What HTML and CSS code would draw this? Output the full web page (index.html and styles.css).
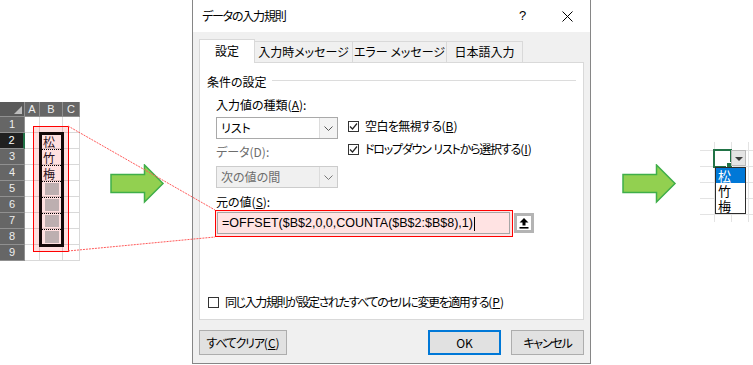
FILE: index.html
```html
<!DOCTYPE html>
<html lang="ja">
<head>
  <meta charset="UTF-8">
  <title>データの入力規則</title>
  <link rel="stylesheet" href="styles.css">
</head>
<body>
  <div class="canvas">

    <!-- Source sheet -->
    <div class="sheet">
      <div class="grid">
        <div class="head corner"></div><div class="head">A</div><div class="head">B</div><div class="head">C</div>
        <div class="head">1</div><div></div><div></div><div></div>
        <div class="head selected">2</div><div></div><div></div><div></div>
        <div class="head">3</div><div></div><div></div><div></div>
        <div class="head">4</div><div></div><div></div><div></div>
        <div class="head">5</div><div></div><div></div><div></div>
        <div class="head">6</div><div></div><div></div><div></div>
        <div class="head">7</div><div></div><div></div><div></div>
        <div class="head">8</div><div></div><div></div><div></div>
        <div class="head">9</div><div></div><div></div><div></div>
      </div>
      <div class="range-mark"></div>
      <div class="range-box">
        <div class="range-item">松</div>
        <div class="range-item">竹</div>
        <div class="range-item">梅</div>
        <div class="range-item"><span class="blank"></span></div>
        <div class="range-item"><span class="blank"></span></div>
        <div class="range-item"><span class="blank"></span></div>
        <div class="range-item"><span class="blank"></span></div>
      </div>
    </div>

    <svg class="arrow arrow-in" width="55" height="40" viewBox="0 0 55 40">
      <polygon points="1,10.5 34.5,10.5 34.5,1 53,19.5 34.5,38 34.5,28.5 1,28.5" fill="#92d050" stroke="#3fae49" stroke-width="1.5"/>
    </svg>

    <!-- Data validation dialog -->
    <div class="dialog">
      <div class="titlebar">
        <span class="title"><span class="tight">データの入力規則</span></span>
        <span class="title-btn">?</span>
        <span class="title-btn">
          <svg width="11" height="11" viewBox="0 0 11 11"><path d="M0.5 0.5 L10.5 10.5 M10.5 0.5 L0.5 10.5" stroke="#000" stroke-width="1"/></svg>
        </span>
      </div>

      <div class="dialog-body">
        <div class="tabs">
          <div class="tab tab-settings active">設定</div>
          <div class="tab tab-input">入力時メッセージ</div>
          <div class="tab tab-error">エラー メッセージ</div>
          <div class="tab tab-ime">日本語入力</div>
        </div>

        <div class="panel">
          <div class="group-title"><span>条件の設定</span></div>

          <div class="criteria">
            <div class="fields">
              <label>入力値の種類(<u>A</u>):</label>
              <div class="select">
                <span class="value">リスト</span>
                <span class="chev"><svg width="9" height="5" viewBox="0 0 9 5"><polyline points="0.5,0.5 4.5,4.5 8.5,0.5" fill="none" stroke="#555" stroke-width="1"/></svg></span>
              </div>
              <label class="dim">データ(D):</label>
              <div class="select disabled">
                <span class="value">次の値の間</span>
                <span class="chev"><svg width="9" height="5" viewBox="0 0 9 5"><polyline points="0.5,0.5 4.5,4.5 8.5,0.5" fill="none" stroke="#777" stroke-width="1"/></svg></span>
              </div>
            </div>
            <div class="options">
              <div class="check">
                <span class="box"><svg width="9" height="9" viewBox="0 0 9 9"><polyline points="1,4.5 3.5,7 8,1.5" fill="none" stroke="#222" stroke-width="1.2"/></svg></span>
                <span><span class="semi">空白を無視する</span>(<u>B</u>)</span>
              </div>
              <div class="check">
                <span class="box"><svg width="9" height="9" viewBox="0 0 9 9"><polyline points="1,4.5 3.5,7 8,1.5" fill="none" stroke="#222" stroke-width="1.2"/></svg></span>
                <span><span class="tight">ドロップダウン</span> <span class="tight">リストから選択する</span>(<u>I</u>)</span>
              </div>
            </div>
          </div>

          <label class="source-label">元の値(<u>S</u>):</label>
          <div class="source-row">
            <div class="source">
              <div class="source-input">=OFFSET($B$2,0,0,COUNTA($B$2:$B$8),1)<span class="caret"></span></div>
            </div>
            <div class="collapse">
              <svg width="10" height="11" viewBox="0 0 10 11"><polygon points="5,0 9.5,4.5 6.5,4.5 6.5,7.5 3.5,7.5 3.5,4.5 0.5,4.5" fill="#000"/><rect x="0.5" y="9" width="9" height="1.6" fill="#000"/></svg>
            </div>
          </div>

          <div class="check apply">
            <span class="box"></span>
            <span><span class="tighter">同じ入力規則が設定されたすべてのセルに変更を適用する</span>(<u>P</u>)</span>
          </div>
        </div>

        <div class="buttons">
          <button class="btn-clear"><span class="tight">すべてクリア</span>(<u>C</u>)</button>
          <button class="btn-ok">OK</button>
          <button class="btn-cancel"><span class="tight">キャンセル</span></button>
        </div>
      </div>
    </div>

    <svg class="arrow arrow-out" width="55" height="40" viewBox="0 0 55 40">
      <polygon points="1,10.5 34.5,10.5 34.5,1 53,19.5 34.5,38 34.5,28.5 1,28.5" fill="#92d050" stroke="#3fae49" stroke-width="1.5"/>
    </svg>

    <!-- Resulting dropdown -->
    <div class="result">
      <div class="active-cell"></div>
      <div class="drop-btn"></div>
      <ul class="drop-list">
        <li class="current">松</li>
        <li>竹</li>
        <li>梅</li>
      </ul>
    </div>

    <svg class="leader" width="753" height="365" viewBox="0 0 753 365">
      <path d="M68 126 L215 210 M68 251 L215 237" stroke="#ff5a5a" stroke-width="1" stroke-dasharray="2 1" fill="none"/>
    </svg>
  </div>
</body>
</html>
```

FILE: styles.css
```css
/* General */
* {
  box-sizing: border-box;
}

body {
  margin: 0;
  background: #fff;
  color: #000;
  font-family: "Noto Sans CJK JP", sans-serif;
  font-size: 12px;
  line-height: 14px;
  font-feature-settings: "palt";
}

.canvas {
  position: relative;
  width: 753px;
  height: 365px;
  display: flex;
  align-items: flex-start;
  overflow: hidden;
}

/* kana-heavy labels: the UI font sets kana narrower */
.semi {
  letter-spacing: -0.6px;
}

.tight {
  letter-spacing: -1.2px;
}

.tighter {
  letter-spacing: -1.4px;
}

/* Source sheet */
.sheet {
  position: relative;
  flex: none;
  width: 80px;
  margin-top: 102px;
}

.grid {
  display: grid;
  grid-template-columns: 25px 15px 23px 17px;
  grid-template-rows: 15px repeat(9, 16px);
  font-family: "Liberation Sans", sans-serif;
  font-size: 11px;
}

.grid > div {
  border-right: 1px solid #d9d9d9;
  border-bottom: 1px solid #d9d9d9;
}

.grid .head {
  background: #666;
  color: #eee;
  text-align: center;
  line-height: 15px;
  border-color: #909090;
}

.grid .corner {
  position: relative;
  background: #5a5a5a;
}

.corner::after {
  content: "";
  position: absolute;
  right: 2px;
  bottom: 2px;
  border-left: 8px solid transparent;
  border-bottom: 8px solid #bdbdbd;
}

.grid .selected {
  background: #202020;
  color: #fff;
  border-right: 2px solid #217346;
}

.range-mark {
  position: absolute;
  left: 33px;
  top: 24px;
  width: 36px;
  height: 126px;
  border: 1px solid #f00;
  background: rgba(255, 0, 0, 0.12);
}

.range-box {
  position: absolute;
  left: 39px;
  top: 30px;
  width: 25px;
  height: 115px;
  border: 3px solid #140808;
  font-size: 12px;
  color: #2a1020;
}

.range-item {
  height: 16px;
  border-top: 1px dotted #000;
  line-height: 15px;
  padding-left: 1px;
}

.range-item:first-child {
  height: 14px;
  border-top: 0;
  line-height: 14px;
}

.range-item:last-child {
  height: 14px;
}

.blank {
  display: inline-block;
  width: 14px;
  height: 12px;
  margin: 1px 0 0 2px;
  vertical-align: top;
  background: #bdafb0;
}

/* Arrows */
.arrow {
  flex: none;
  margin-top: 164px;
}

.arrow-in {
  margin-left: 30px;
}

.arrow-out {
  margin-left: 31px;
}

.leader {
  position: absolute;
  left: 0;
  top: 0;
  pointer-events: none;
}

/* Dialog */
.dialog {
  flex: none;
  width: 399px;
  margin-left: 27px;
  background: #f0f0f0;
  border: 1px solid #868686;
  border-top: 0;
}

.titlebar {
  display: flex;
  align-items: center;
  height: 32px;
  background: #fff;
}

.title {
  flex: 1;
  padding-left: 9px;
}

.title-btn {
  display: flex;
  justify-content: center;
  align-items: center;
  width: 45px;
  height: 32px;
  font-family: "Liberation Sans", sans-serif;
  font-size: 13px;
}

.dialog-body {
  padding: 7px 6px 8px;
}

.tabs {
  display: flex;
  align-items: flex-end;
  height: 23px;
}

.tab {
  height: 21px;
  line-height: 19px;
  margin-right: -1px;
  border: 1px solid #d9d9d9;
  border-bottom: 0;
  background: #f0f0f0;
  text-align: center;
}

.tab.active {
  position: relative;
  z-index: 1;
  height: 24px;
  line-height: 22px;
  margin-bottom: -1px;
  background: #fff;
}

.tab-settings { width: 56px; }
.tab-input { width: 99px; }
.tab-error { width: 95px; }
.tab-ime { width: 77px; }

.panel {
  display: flex;
  flex-direction: column;
  height: 258px;
  padding: 12px 7px 10px;
  background: #fff;
  border: 1px solid #d9d9d9;
}

.group-title {
  display: flex;
  align-items: center;
  gap: 5px;
}

.group-title::after {
  content: "";
  flex: 1;
  margin-top: -3px;
  border-top: 1px solid #dcdcdc;
}

.criteria {
  display: flex;
  margin: 9px 0 0 9px;
}

.fields {
  display: flex;
  flex-direction: column;
  width: 122px;
}

.select {
  display: flex;
  height: 22px;
  margin-top: 5px;
  background: #fff;
  border: 1px solid #a9a9a9;
}

.select .value {
  flex: 1;
  padding-left: 4px;
  line-height: 20px;
}

.select .chev {
  display: flex;
  justify-content: center;
  align-items: center;
  width: 18px;
  background: #f3f3f3;
  border-left: 1px solid #dcdcdc;
}

.dim {
  margin-top: 6px;
  color: #6d6d6d;
}

.select.disabled {
  margin-top: 7px;
  background: #f0f0f0;
  border-color: #cccccc;
  color: #6d6d6d;
}

.select.disabled .chev {
  background: #f0f0f0;
}

.options {
  display: flex;
  flex-direction: column;
  gap: 9px;
  margin: 21px 0 0 10px;
}

.check {
  display: flex;
  align-items: center;
  gap: 6px;
}

.box {
  display: flex;
  justify-content: center;
  align-items: center;
  width: 11px;
  height: 11px;
  background: #fff;
  border: 1px solid #333;
}

.source-label {
  margin: 7px 0 0 9px;
}

.source-row {
  display: flex;
  margin: 1px 0 0 8px;
}

.source {
  width: 298px;
  height: 27px;
  padding: 1px 2px 2px 1px;
  background: #ffe3e3;
  border: 1px solid #f00;
}

.source-input {
  height: 22px;
  padding-left: 4px;
  border: 1px solid #a6a6a6;
  font-family: "Liberation Sans", sans-serif;
  font-size: 12.5px;
  line-height: 20px;
  white-space: nowrap;
}

.caret {
  display: inline-block;
  width: 1px;
  height: 14px;
  margin-left: 1px;
  vertical-align: middle;
  background: #000;
}

.collapse {
  display: flex;
  justify-content: center;
  align-items: center;
  width: 20px;
  height: 20px;
  margin: 3px 0 0 1px;
  background: #fff;
  border: 3px solid #b4b4b4;
}

.apply {
  margin: auto 0 0 1px;
}

/* Dialog buttons */
.buttons {
  display: flex;
  gap: 10px;
  margin-top: 10px;
}

.buttons button {
  height: 25px;
  padding: 0;
  background: #e1e1e1;
  border: 1px solid #adadad;
  font-family: inherit;
  font-size: 12px;
  font-feature-settings: "palt";
  color: #000;
}

.btn-clear {
  width: 88px;
  margin-right: auto;
}

.btn-ok,
.btn-cancel {
  width: 73px;
}

.buttons .btn-ok {
  border: 2px solid #0078d7;
}

/* Resulting dropdown */
.result {
  position: relative;
  flex: none;
  width: 53px;
  height: 80px;
  margin: 142px 0 0 23px;
  background-image:
    linear-gradient(to right, #e3e3e3 1px, transparent 1px),
    linear-gradient(to bottom, #e3e3e3 1px, transparent 1px);
  background-size: 17px 16px;
  background-position: 14px 8px;
}

.active-cell {
  position: absolute;
  left: 13px;
  top: 7px;
  width: 19px;
  height: 19px;
  border: 2px solid #217346;
}

.active-cell::after {
  content: "";
  position: absolute;
  right: -3px;
  bottom: -3px;
  width: 5px;
  height: 5px;
  background: #217346;
  border: 1px solid #fff;
}

.drop-btn {
  position: absolute;
  left: 31px;
  top: 8px;
  width: 15px;
  height: 16px;
  background: #e4e4e4;
  border: 1px solid #b9b9b9;
}

.drop-btn::after {
  content: "";
  position: absolute;
  left: 3px;
  top: 6px;
  border-left: 4px solid transparent;
  border-right: 4px solid transparent;
  border-top: 4px solid #3c3c3c;
}

.drop-list {
  position: absolute;
  left: 15px;
  top: 25px;
  width: 31px;
  margin: 0;
  padding: 0;
  list-style: none;
  background: #fff;
  border: 1px solid #2b2b2b;
  font-size: 13px;
  line-height: 15px;
}

.drop-list li {
  height: 15px;
  padding-left: 2px;
}

.drop-list .current {
  background: #0078d7;
  color: #fff;
}
```
